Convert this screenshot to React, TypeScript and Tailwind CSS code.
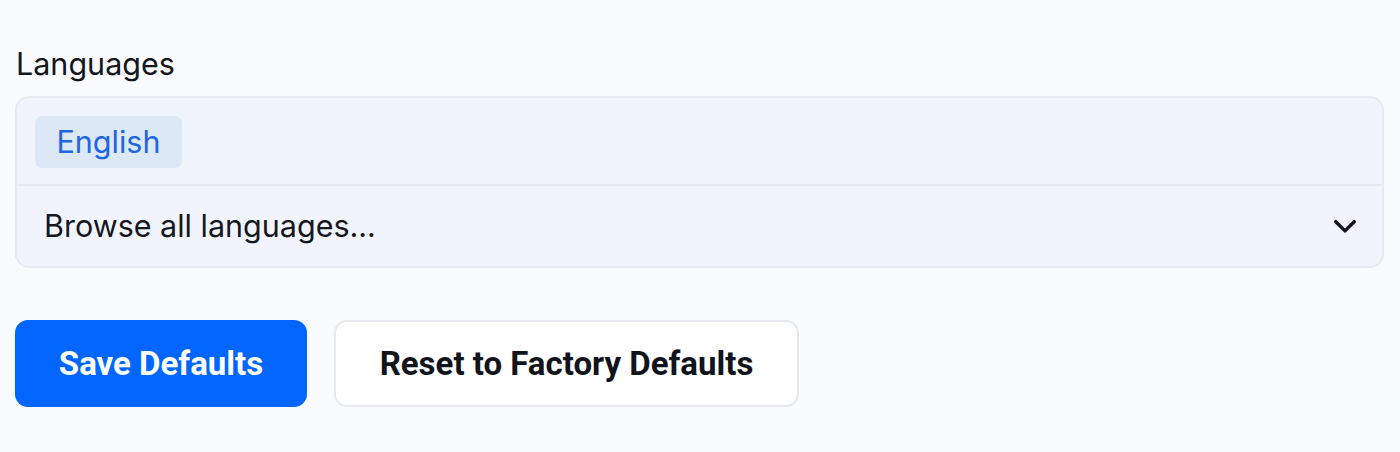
import React from "react";

function ChevronDown() {
  return (
    <svg width="26" height="26" viewBox="0 0 24 24" fill="none" className="shrink-0">
      <path d="M3.5 8l8.5 8.5L20.5 8" stroke="#0f1322" strokeWidth="3.2" strokeLinecap="round" strokeLinejoin="round" />
    </svg>
  );
}

export default function App() {
  return (
    <div className="min-h-[452px] w-full bg-[#fafbfe] px-[15px] pt-[46px] font-['Inter',sans-serif]">
      <label className="block text-[30.5px] leading-[36px] text-[#14161c] pl-[1px]">Languages</label>

      <div className="mt-[14px] w-[1369px] rounded-[14px] border-2 border-[#e7eaf2] bg-[#f1f4fc]">
        <div className="flex px-[18px] pt-[18px] pb-[16px]">
          <span className="flex h-[52px] w-[147px] items-center justify-center rounded-[7px] bg-[#dde8f7] text-[30.5px] text-[#1f66e0]">
            English
          </span>
        </div>
        <div className="h-[2px] bg-[#e6e9f1]" />
        <div className="flex h-[80px] items-center justify-between pl-[27px] pr-[24px]">
          <span className="text-[30.5px] text-[#16181e]">Browse all languages...</span>
          <ChevronDown />
        </div>
      </div>

      <div className="mt-[52px] flex gap-[27px]">
        <button className="h-[87px] w-[292px] rounded-[13px] bg-[#0066ff] text-[33px] font-bold text-white font-['Roboto',sans-serif]">
          Save Defaults
        </button>
        <button className="h-[87px] w-[465px] rounded-[13px] border-2 border-[#e7e9ef] bg-white text-[33px] font-bold text-[#12141c] font-['Roboto',sans-serif]">
          Reset to Factory Defaults
        </button>
      </div>
    </div>
  );
}
